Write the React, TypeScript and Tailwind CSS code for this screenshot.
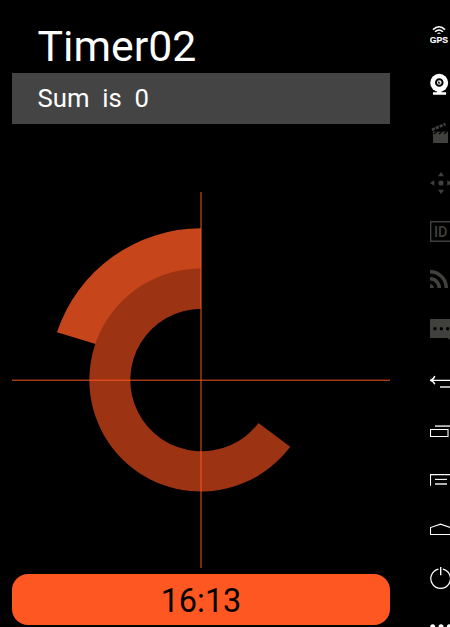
import type { ReactNode } from "react";

function RailIcon({ top, dim, children }: { top: number; dim?: boolean; children: ReactNode }) {
  return (
    <svg
      className={dim ? "block h-[49px] w-5 shrink-0 text-[#40403c]" : "block h-[49px] w-5 shrink-0 text-white"}
      viewBox={`430 ${top} 20 49`}
      fill="none"
      stroke="currentColor"
    >
      {children}
    </svg>
  );
}

function Rail() {
  return (
    <aside className="flex h-full w-5 flex-col overflow-hidden pt-2.5">
      <RailIcon top={10}>
        <path d="M433 29.6Q439 24 445 29.6M435 31.8Q439 28.2 443 31.8" strokeWidth="1.5" />
        <path d="M437 33.8Q439 31 441 33.8Z" fill="currentColor" stroke="none" />
        <text x="429.8" y="42.6" fontSize="8.8" fontWeight="900" textLength="18.2" lengthAdjust="spacingAndGlyphs" fill="currentColor" strokeWidth="0.15" className="font-['Liberation_Sans',sans-serif]">GPS</text>
      </RailIcon>
      <RailIcon top={59}>
        <circle cx="439.2" cy="82.8" r="9" fill="currentColor" stroke="none" />
        <circle cx="439.3" cy="82.5" r="3.3" stroke="#000" strokeWidth="2" />
        <path d="M439.3 81.2A1.3 1.3 0 1 0 440.6 82.5L439.3 82.5Z" fill="#000" stroke="none" />
        <path d="M437 90h4.5v2.2h4.5v2.6h-13v-2.6h4z" fill="currentColor" stroke="none" />
      </RailIcon>
      <RailIcon top={108} dim>
        <path d="M433 131.6H448V143H433Z" fill="currentColor" stroke="none" />
        <path d="M432 129.8L445.5 124" strokeWidth="2.8" strokeDasharray="3.2 1" />
        <path d="M434 134L437 131.5M439 134L442 131.5M444 134L447 131.5" stroke="#000" strokeWidth="1.1" />
      </RailIcon>
      <RailIcon top={157} dim>
        <circle cx="441" cy="183" r="2.6" fill="currentColor" stroke="none" />
        <path d="M441 172l3 4.3h-6zM441 194l3-4.3h-6zM430 183l4.3-2.7v5.4zM452 183l-4.7-2.7v5.4z" fill="currentColor" stroke="none" />
      </RailIcon>
      <RailIcon top={206} dim>
        <path d="M430.7 221.7H453V241.3H430.7Z" strokeWidth="1.4" />
        <text x="434" y="237" fontSize="14.5" fontWeight="500" textLength="13.5" lengthAdjust="spacingAndGlyphs" fill="currentColor" stroke="none" className="font-[Roboto,sans-serif]">ID</text>
      </RailIcon>
      <RailIcon top={255} dim>
        <path d="M430 271.7A16.3 16.3 0 0 1 446.3 288M430 278.7A9.3 9.3 0 0 1 439.3 288" strokeWidth="3.5" />
        <path d="M430 284.2A3.8 3.8 0 0 1 433.8 288H430Z" fill="currentColor" stroke="none" />
      </RailIcon>
      <RailIcon top={304} dim>
        <path d="M430 319H450V340L447.5 338H430Z" fill="currentColor" stroke="none" />
        <g fill="#000" stroke="none">
          <circle cx="435" cy="328.8" r="1.7" />
          <circle cx="441.3" cy="328.8" r="1.7" />
          <circle cx="447.7" cy="328.8" r="1.7" />
        </g>
      </RailIcon>
      <RailIcon top={353}>
        <path d="M450 380.4H431M434.8 376Q433.6 379.5 430.2 380.4Q433.6 381.1 434.8 384.2" strokeWidth="1.4" />
        <path d="M440 387H450" stroke="#ccc" strokeWidth="1.7" />
      </RailIcon>
      <RailIcon top={402}>
        <path d="M435 426.1H450" stroke="#bbb" strokeWidth="1.8" />
        <path d="M430.5 429.5H448V436.5H430.5Z" strokeWidth="1.1" />
      </RailIcon>
      <RailIcon top={451}>
        <path d="M430.5 485.7V474.6H450" strokeWidth="1.1" />
        <path d="M435 479.4H447" strokeWidth="1.1" />
        <path d="M435 484H447" stroke="#b0b0b0" strokeWidth="2" />
      </RailIcon>
      <RailIcon top={500}>
        <path d="M452 534.5H430.5V527.6L440.5 524.2L450.5 527.6V534.5" strokeWidth="1.1" />
      </RailIcon>
      <RailIcon top={549}>
        <path d="M438.5 569.1A9.8 9.8 0 1 0 442.8 569.1" strokeWidth="1.2" />
        <path d="M440.7 567V575.3" strokeWidth="1.4" />
      </RailIcon>
      <RailIcon top={598}>
        <g fill="currentColor" stroke="none">
          <circle cx="432.7" cy="626.7" r="2.5" />
          <circle cx="441" cy="626.7" r="2.5" />
          <circle cx="449.3" cy="626.7" r="2.5" />
        </g>
      </RailIcon>
    </aside>
  );
}

function Dial() {
  return (
    <svg className="block h-[376px] w-[378px]" viewBox="12 192 378 376">
      <path d="M201 228.3A151.7 151.7 0 0 0 57 332.2L98 344.7A109 109 0 0 1 201 271Z" fill="#c7451a" />
      <path d="M201 268.5A111.5 111.5 0 1 0 290.2 446.7L258.5 423A71.3 71.3 0 1 1 201 308.7Z" fill="#9c3414" />
      <rect x="200" y="192" width="2" height="376" fill="#ff5722" fillOpacity="0.48" />
      <rect x="12" y="379" width="378" height="1" fill="#ff5722" fillOpacity="0.3" />
      <rect x="12" y="380" width="378" height="1" fill="#ff5722" fillOpacity="0.65" />
    </svg>
  );
}

export default function App() {
  return (
    <div className="flex h-[627px] w-[450px] justify-between overflow-hidden bg-black pl-3 font-[Roboto,sans-serif]">
      <main className="flex w-[378px] flex-col">
        <h1 className="h-[73px] pt-[21px] pl-[25.5px] text-[42.8px] leading-[50px] text-white">Timer02</h1>
        <div className="h-[51px] bg-[#444] pl-[25.5px] text-[25.7px] leading-[50px] whitespace-pre text-white">Sum  is  0</div>
        <div className="mt-[68px]">
          <Dial />
        </div>
        <button className="mt-1.5 h-[51px] rounded-2xl bg-[#ff5722] pt-[2px] text-center text-[32.4px] leading-[48px] text-black">16:13</button>
      </main>
      <Rail />
    </div>
  );
}
